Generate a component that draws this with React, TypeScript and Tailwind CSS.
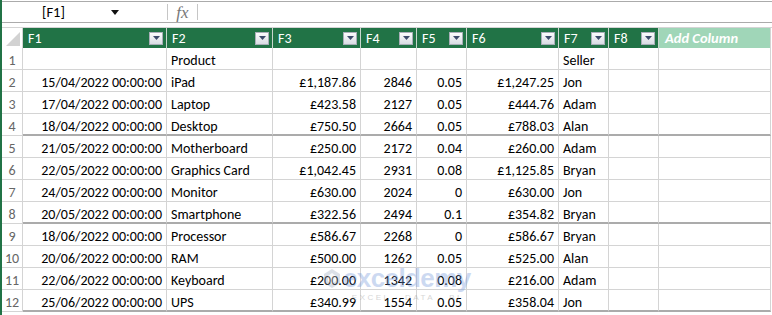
import React from "react";

const FONT = "font-['Carlito','Liberation_Sans',sans-serif]";

type Row = string[];
const rows: Row[] = [
  ["", "Product", "", "", "", "", "Seller"],
  ["15/04/2022 00:00:00", "iPad", "£1,187.86", "2846", "0.05", "£1,247.25", "Jon"],
  ["17/04/2022 00:00:00", "Laptop", "£423.58", "2127", "0.05", "£444.76", "Adam"],
  ["18/04/2022 00:00:00", "Desktop", "£750.50", "2664", "0.05", "£788.03", "Alan"],
  ["21/05/2022 00:00:00", "Motherboard", "£250.00", "2172", "0.04", "£260.00", "Adam"],
  ["22/05/2022 00:00:00", "Graphics Card", "£1,042.45", "2931", "0.08", "£1,125.85", "Bryan"],
  ["24/05/2022 00:00:00", "Monitor", "£630.00", "2024", "0", "£630.00", "Jon"],
  ["20/05/2022 00:00:00", "Smartphone", "£322.56", "2494", "0.1", "£354.82", "Bryan"],
  ["18/06/2022 00:00:00", "Processor", "£586.67", "2268", "0", "£586.67", "Bryan"],
  ["20/06/2022 00:00:00", "RAM", "£500.00", "1262", "0.05", "£525.00", "Alan"],
  ["22/06/2022 00:00:00", "Keyboard", "£200.00", "1342", "0.08", "£216.00", "Adam"],
  ["25/06/2022 00:00:00", "UPS", "£340.99", "1554", "0.05", "£358.04", "Jon"],
];

const rightAligned = [true, false, true, true, true, true, false, false, false];
const thickAfter = [4, 8, 12];

function DropButton() {
  return (
    <div className="ml-auto mr-[3px] flex h-[13px] w-[14px] items-center justify-center border border-[#a9aeb8] bg-gradient-to-b from-[#fbfbfc] to-[#d9dde4]">
      <svg width="7" height="4" viewBox="0 0 7 4">
        <polygon points="0,0 7,0 3.5,4" fill="#3c4a6a" />
      </svg>
    </div>
  );
}

function HeaderCell({ label }: { label: string }) {
  return (
    <div className="flex h-[20px] items-center border-r border-[#c9d6ce] bg-[#217346] pl-[5px] text-white">
      <span className="pt-[1px] text-[14px] leading-none">{label}</span>
      <DropButton />
    </div>
  );
}

function Watermark() {
  return (
    <div className="pointer-events-none absolute left-[321px] top-[265px] flex flex-col items-center opacity-35">
      <div className="flex items-center gap-[2px]">
        <svg width="18" height="21" viewBox="0 0 18 21">
          <polygon points="9,1 17,6 17,15 9,20 1,15 1,6" fill="#9aa7bd" />
          <polygon points="9,5 13,8 13,13 9,16 5,13 5,8" fill="#eef1f6" />
        </svg>
        <span className="font-['Liberation_Sans',sans-serif] text-[26px] font-bold leading-none tracking-[-0.6px] text-[#6f95d8]">
          exceldemy
        </span>
      </div>
      <span className="ml-[20px] mt-[3px] font-['Liberation_Sans',sans-serif] text-[8px] leading-none tracking-[2.5px] text-[#8a8a8a]">
        EXCEL · DATA · BI
      </span>
    </div>
  );
}

export default function App() {
  return (
    <div className={`relative h-[315px] w-[772px] overflow-hidden border-l-2 border-[#217346] bg-white pt-px ${FONT} text-[14px] text-black`}>
      {/* formula bar */}
      <div className="flex h-[22px] border-y border-[#ababab]">
        <div className="flex w-[165px] items-center">
          <span className="ml-[40px] text-[14.5px] leading-none">[F1]</span>
          <svg className="ml-[46px]" width="8" height="5" viewBox="0 0 8 5">
            <polygon points="0,0 8,0 4,5" fill="#111" />
          </svg>
        </div>
        <div className="my-[2px] w-px bg-[#c6c6c6]" />
        <div className="flex w-[29px] items-center justify-center">
          <span className="font-['Liberation_Serif',serif] text-[17px] italic leading-none text-[#777]">fx</span>
        </div>
        <div className="my-[2px] w-px bg-[#c6c6c6]" />
        <div className="flex-1" />
      </div>
      <div className="h-[4px]" />

      {/* grid */}
      <div className="grid grid-cols-[21px_144px_106px_88px_56px_50px_92px_50px_50px_112px] border-t border-[#d4d4d4]">
        {/* header */}
        <div className="relative h-[20px] border-r border-[#d4d4d4] bg-white">
          <svg className="absolute left-[3px] top-[3px]" width="16" height="16" viewBox="0 0 16 16">
            <polygon points="1,15 15,15 15,1" fill="#d2d2d2" />
          </svg>
        </div>
        {["F1", "F2", "F3", "F4", "F5", "F6", "F7", "F8"].map((f) => (
          <HeaderCell key={f} label={f} />
        ))}
        <div className="flex h-[20px] items-center border-r border-[#d4d4d4] bg-[#a0d6b8] pl-[6px]">
          <span className="pt-[1px] text-[14.5px] font-bold italic leading-none text-white">Add Column</span>
        </div>

        {/* body */}
        {rows.map((r, ri) => {
          const n = ri + 1;
          const thick = thickAfter.includes(n);
          const cells = [...r, "", ""];
          return (
            <React.Fragment key={n}>
              <div className="flex h-[22px] items-start justify-center border-r border-b border-[#d4d4d4] pt-[5px] leading-[16px] text-[#666]">
                {n}
              </div>
              {cells.map((c, ci) => (
                <div
                  key={ci}
                  className={`flex h-[22px] items-start whitespace-nowrap border-r border-[#d4d4d4] px-[4px] pt-[5px] leading-[16px] ${
                    rightAligned[ci] ? "justify-end" : "justify-start"
                  } ${thick ? "border-b-2 border-b-[#ababab]" : "border-b border-b-[#d4d4d4]"}`}
                >
                  {c}
                </div>
              ))}
            </React.Fragment>
          );
        })}
      </div>
      <Watermark />
    </div>
  );
}
